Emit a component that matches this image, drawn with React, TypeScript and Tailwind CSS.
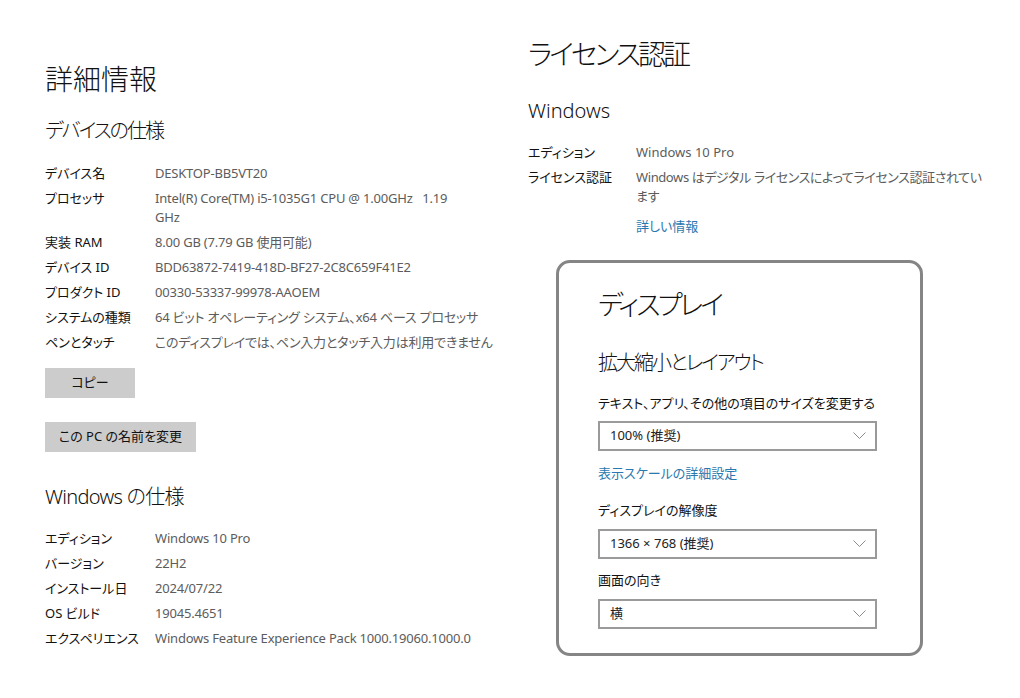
const font = '[font-family:"Noto_Sans","Noto_Sans_CJK_JP",sans-serif] [font-feature-settings:"palt"]';

const deviceSpecs: [string, React.ReactNode][] = [
  ['デバイス名', 'DESKTOP-BB5VT20'],
  [
    'プロセッサ',
    <>
      Intel(R) Core(TM) i5-1035G1 CPU @ 1.00GHz&nbsp;&nbsp;&nbsp;1.19
      <br />
      GHz
    </>,
  ],
  ['実装 RAM', '8.00 GB (7.79 GB 使用可能)'],
  ['デバイス ID', 'BDD63872-7419-418D-BF27-2C8C659F41E2'],
  ['プロダクト ID', '00330-53337-99978-AAOEM'],
  ['システムの種類', '64 ビット オペレーティング システム、x64 ベース プロセッサ'],
  ['ペンとタッチ', 'このディスプレイでは、ペン入力とタッチ入力は利用できません'],
];

const windowsSpecs: [string, string][] = [
  ['エディション', 'Windows 10 Pro'],
  ['バージョン', '22H2'],
  ['インストール日', '2024/07/22'],
  ['OS ビルド', '19045.4651'],
  ['エクスペリエンス', 'Windows Feature Experience Pack 1000.19060.1000.0'],
];

function SpecRows({ rows }: { rows: [string, React.ReactNode][] }) {
  return (
    <div className="flex flex-col gap-[6px]">
      {rows.map(([label, value], i) => (
        <div key={i} className="flex text-[13px] leading-[19px]">
          <div className="w-[110px] shrink-0 text-[#111]">{label}</div>
          <div className="whitespace-nowrap tracking-[-0.2px] text-[#5c5c5c]">{value}</div>
        </div>
      ))}
    </div>
  );
}

function Select({ value }: { value: string }) {
  return (
    <div className="flex h-[30px] w-[279px] items-center justify-between border-2 border-[#9a9a9a] pl-[10px] pr-[9px] text-[13px] text-[#222]">
      <span>{value}</span>
      <svg width="13" height="8" viewBox="0 0 13 8" fill="none">
        <polyline points="0.5,0.5 6.5,6.5 12.5,0.5" stroke="#8c8c8c" strokeWidth="1" />
      </svg>
    </div>
  );
}

export default function App() {
  return (
    <div className={`${font} flex h-[698px] w-[1020px] overflow-hidden bg-white text-black`}>
      {/* left column */}
      <div className="w-[483px] shrink-0 pl-[45px] pt-[59px]">
        <h1 className="text-[28px] font-light leading-[40px] text-[#111]">詳細情報</h1>
        <h2 className="mt-[18px] text-[20px] font-light leading-[28px] tracking-[-2px] text-[#111]">デバイスの仕様</h2>
        <div className="mt-[19px]">
          <SpecRows rows={deviceSpecs} />
        </div>
        <button className="mt-[16px] flex h-[30px] w-[90px] items-center justify-center bg-[#cccccc] text-[13px] text-[#111]">
          コピー
        </button>
        <button className="mt-[24px] flex h-[30px] w-[151px] items-center justify-center bg-[#cccccc] text-[13px] text-[#111]">
          この PC の名前を変更
        </button>
        <h2 className="mt-[31px] text-[20px] font-light leading-[28px] tracking-[-0.7px] text-[#111]">Windows の仕様</h2>
        <div className="mt-[18px]">
          <SpecRows rows={windowsSpecs} />
        </div>
      </div>

      {/* right column */}
      <div className="flex-1 pl-[45px] pt-[34px]">
        <h1 className="text-[28px] font-light leading-[40px] tracking-[-3px] text-[#111]">ライセンス認証</h1>
        <h2 className="mt-[23px] text-[20px] font-light leading-[28px] text-[#111]">Windows</h2>
        <div className="mt-[18px] flex flex-col gap-[6px] text-[13px] leading-[19px]">
          <div className="flex">
            <div className="w-[108px] shrink-0 text-[#111]">エディション</div>
            <div className="text-[#5c5c5c]">Windows 10 Pro</div>
          </div>
          <div className="flex">
            <div className="w-[108px] shrink-0 text-[#111]">ライセンス認証</div>
            <div className="whitespace-nowrap tracking-[-0.4px] text-[#5c5c5c]">
              Windows はデジタル ライセンスによってライセンス認証されてい
              <br />
              ます
            </div>
          </div>
          <div className="mt-[5px] pl-[108px] text-[#2a78b0]">詳しい情報</div>
        </div>

        <div className="ml-[28px] mt-[24px] w-[367px] rounded-[14px] border-[3px] border-[#858585] pb-[24px] pl-[39px] pt-[23px]">
          <h2 className="text-[27px] font-light leading-[38px] tracking-[-3px] text-[#111]">ディスプレイ</h2>
          <h3 className="mt-[25px] text-[20px] font-light leading-[28px] tracking-[-2px] text-[#111]">
            拡大縮小とレイアウト
          </h3>
          <div className="mt-[16px] text-[13px] leading-[20px] text-[#111]">
            テキスト、アプリ、その他の項目のサイズを変更する
          </div>
          <div className="mt-[8px]">
            <Select value="100% (推奨)" />
          </div>
          <div className="mt-[12px] text-[13px] leading-[20px] text-[#2a78b0]">表示スケールの詳細設定</div>
          <div className="mt-[17px] text-[13px] leading-[20px] text-[#111]">ディスプレイの解像度</div>
          <div className="mt-[9px]">
            <Select value="1366 × 768 (推奨)" />
          </div>
          <div className="mt-[11px] text-[13px] leading-[20px] text-[#111]">画面の向き</div>
          <div className="mt-[9px]">
            <Select value="横" />
          </div>
        </div>
      </div>
    </div>
  );
}
